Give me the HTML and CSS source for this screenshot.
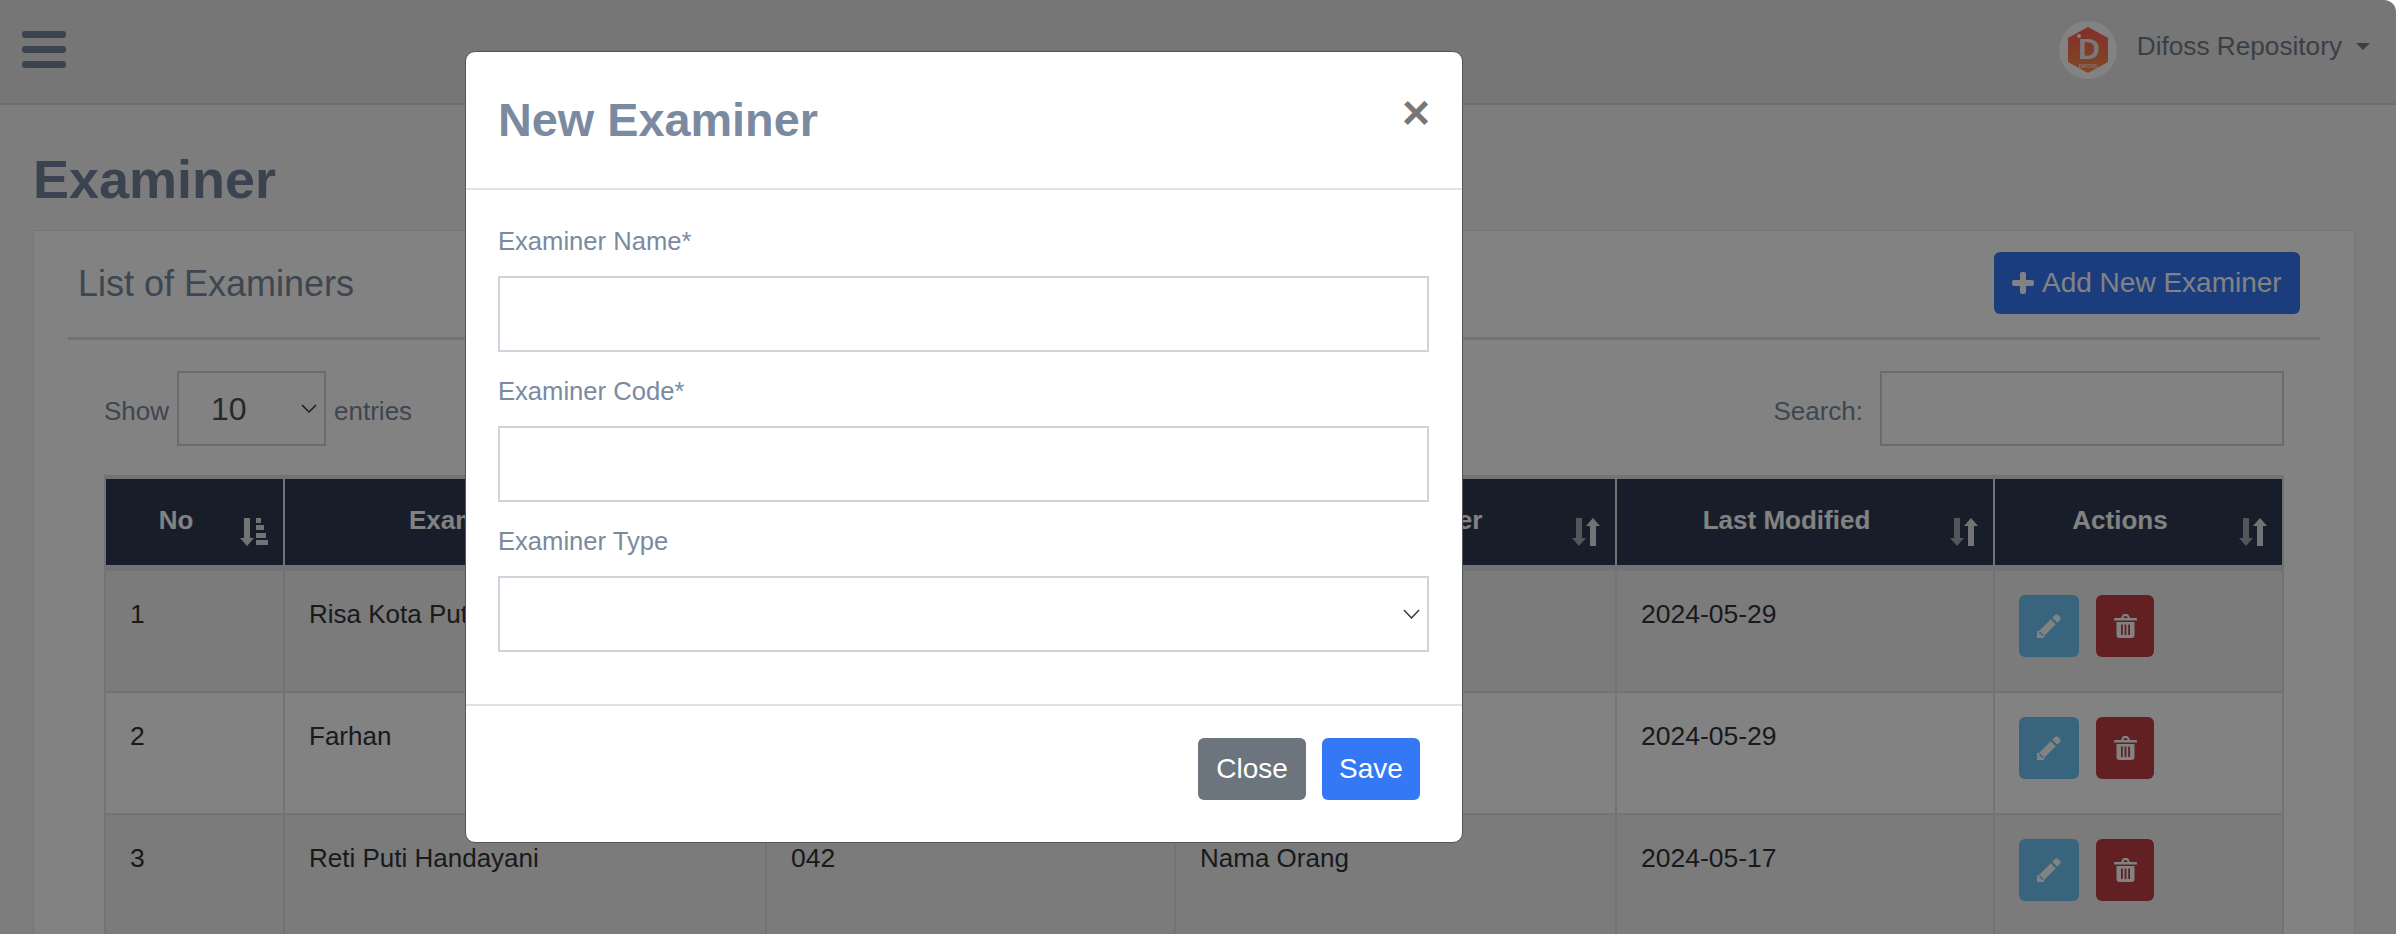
FILE: index.html
```html
<!DOCTYPE html>
<html lang="en">
<head>
    <meta charset="UTF-8">
    <meta name="viewport" content="width=device-width, initial-scale=1.0">
    <title>Examiner</title>
    <link rel="stylesheet" href="styles.css">
</head>
<body>
    <div class="page">
        <!-- Top bar -->
        <header class="topbar">
            <svg class="burger" width="44" height="37" viewBox="0 0 44 37">
                <rect width="44" height="7" rx="3"/>
                <rect y="15" width="44" height="7" rx="3"/>
                <rect y="30" width="44" height="7" rx="3"/>
            </svg>
            <div class="user">
                <span class="avatar">
                    <svg width="40" height="46" viewBox="0 0 40 46">
                        <defs>
                            <linearGradient id="hexFill" x1="0" y1="0" x2="0" y2="1">
                                <stop offset="0" stop-color="#ff5a55"/>
                                <stop offset="1" stop-color="#ff8f4c"/>
                            </linearGradient>
                        </defs>
                        <polygon points="20,0 40,11 40,35 20,46 0,35 0,11" fill="url(#hexFill)"/>
                        <circle cx="11" cy="9" r="2" fill="#fff"/>
                        <text x="21" y="32" class="logo-letter">D</text>
                        <text x="20" y="41" class="logo-small">DIFOSS</text>
                    </svg>
                </span>
                <span class="user-name">Difoss Repository</span>
                <span class="caret"></span>
            </div>
        </header>

        <main class="content">
            <h1>Examiner</h1>
            <section class="card">
                <div class="card-header">
                    <h2>List of Examiners</h2>
                    <button class="btn-add">
                        <svg width="22" height="22" viewBox="0 0 22 22"><path d="M8 2a2 2 0 0 1 2-2h2a2 2 0 0 1 2 2v6h6a2 2 0 0 1 2 2v2a2 2 0 0 1-2 2h-6v6a2 2 0 0 1-2 2h-2a2 2 0 0 1-2-2v-6H2a2 2 0 0 1-2-2v-2a2 2 0 0 1 2-2h6z"/></svg>
                        Add New Examiner
                    </button>
                </div>
                <div class="card-body">
                    <div class="table-tools">
                        <div class="tools-left">
                            <span class="tools-text">Show</span>
                            <div class="select-wrap length-select">
                                <select>
                                    <option>10</option>
                                </select>
                                <svg class="chevron" width="16" height="10" viewBox="0 0 16 10"><path d="M1 1l7 7 7-7"/></svg>
                            </div>
                            <span class="tools-text">entries</span>
                        </div>
                        <div class="tools-right">
                            <span class="tools-text">Search:</span>
                            <input class="search-input" type="text">
                        </div>
                    </div>

                    <table class="data-table">
                        <thead>
                            <tr>
                                <th class="col-no">No
                                    <svg class="sort-icon" width="28" height="28" viewBox="0 0 28 28">
                                        <path class="sort-on" d="M4 0h6v20h4l-7 8-7-8h4z"/>
                                        <path class="sort-on" d="M16 0h5v5h-5zM16 7h8v5h-8zM16 15h10v5H16zM16 22h12v5H16z"/>
                                    </svg>
                                </th>
                                <th class="col-name">Examiner Name
                                    <svg class="sort-icon" width="28" height="28" viewBox="0 0 28 28"><use href="#sortBoth"/></svg>
                                </th>
                                <th class="col-code">Examiner Code
                                    <svg class="sort-icon" width="28" height="28" viewBox="0 0 28 28"><use href="#sortBoth"/></svg>
                                </th>
                                <th class="col-modifier">Name of Modifier
                                    <svg class="sort-icon" width="28" height="28" viewBox="0 0 28 28"><use href="#sortBoth"/></svg>
                                </th>
                                <th class="col-date">Last Modified
                                    <svg class="sort-icon" width="28" height="28" viewBox="0 0 28 28"><use href="#sortBoth"/></svg>
                                </th>
                                <th class="col-actions">Actions
                                    <svg class="sort-icon" width="28" height="28" viewBox="0 0 28 28"><use href="#sortBoth"/></svg>
                                </th>
                            </tr>
                        </thead>
                        <tbody>
                            <tr>
                                <td>1</td>
                                <td class="cell-name">Risa Kota Putri</td>
                                <td>044</td>
                                <td class="cell-name">Nama Orang</td>
                                <td>2024-05-29</td>
                                <td>
                                    <div class="row-actions">
                                        <button class="btn-icon btn-edit"><svg width="24" height="24" viewBox="0 0 24 24"><use href="#pencil"/></svg></button>
                                        <button class="btn-icon btn-delete"><svg width="23" height="24" viewBox="0 0 23 24"><use href="#trash"/></svg></button>
                                    </div>
                                </td>
                            </tr>
                            <tr>
                                <td>2</td>
                                <td class="cell-name">Farhan</td>
                                <td>043</td>
                                <td class="cell-name">Nama Orang</td>
                                <td>2024-05-29</td>
                                <td>
                                    <div class="row-actions">
                                        <button class="btn-icon btn-edit"><svg width="24" height="24" viewBox="0 0 24 24"><use href="#pencil"/></svg></button>
                                        <button class="btn-icon btn-delete"><svg width="23" height="24" viewBox="0 0 23 24"><use href="#trash"/></svg></button>
                                    </div>
                                </td>
                            </tr>
                            <tr>
                                <td>3</td>
                                <td class="cell-name">Reti Puti Handayani</td>
                                <td>042</td>
                                <td class="cell-name">Nama Orang</td>
                                <td>2024-05-17</td>
                                <td>
                                    <div class="row-actions">
                                        <button class="btn-icon btn-edit"><svg width="24" height="24" viewBox="0 0 24 24"><use href="#pencil"/></svg></button>
                                        <button class="btn-icon btn-delete"><svg width="23" height="24" viewBox="0 0 23 24"><use href="#trash"/></svg></button>
                                    </div>
                                </td>
                            </tr>
                        </tbody>
                    </table>
                </div>
            </section>
        </main>

        <!-- Modal for new examiner -->
        <div class="overlay">
            <div class="modal">
                <div class="modal-header">
                    <h3>New Examiner</h3>
                    <span class="modal-close">×</span>
                </div>
                <form class="modal-body">
                    <div class="form-group">
                        <label>Examiner Name*</label>
                        <input class="form-input" type="text">
                    </div>
                    <div class="form-group">
                        <label>Examiner Code*</label>
                        <input class="form-input" type="text">
                    </div>
                    <div class="form-group">
                        <label>Examiner Type</label>
                        <div class="select-wrap">
                            <select class="form-input">
                                <option></option>
                            </select>
                            <svg class="chevron" width="17" height="10" viewBox="0 0 17 10"><path d="M1 1l7.5 8L16 1"/></svg>
                        </div>
                    </div>
                </form>
                <div class="modal-footer">
                    <button class="btn btn-close">Close</button>
                    <button class="btn btn-save">Save</button>
                </div>
            </div>
        </div>
    </div>

    <!-- Shared icons -->
    <svg class="icon-defs" width="0" height="0">
        <defs>
            <g id="sortBoth">
                <path class="sort-off" d="M4 0h6v20h4l-7 8-7-8h4z"/>
                <path class="sort-on" d="M18 28V8h-4l7-8 7 8h-4v20z"/>
            </g>
            <g id="pencil">
                <path d="M15.3 3.7l2.6-2.6a2.4 2.4 0 0 1 3.3 0l1.7 1.7a2.4 2.4 0 0 1 0 3.3l-2.6 2.6z"/>
                <path fill-rule="evenodd" d="M13.8 5.2l5 5L7 22v2H0v-7h2zM3 17.500l-1 1 3.500 3.500 1-1z"/>
            </g>
            <g id="trash">
                <path fill-rule="evenodd" d="M7 4l1.500-3A2 2 0 0 1 10.300 0h2.400a2 2 0 0 1 1.800 1L16 4h6a1 1 0 0 1 1 1v1.500H0V5a1 1 0 0 1 1-1zM9.300 4h4.400l-.8-1.700h-2.800zM2.500 8h18v13a3 3 0 0 1-3 3h-12a3 3 0 0 1-3-3zM7 10.500v10.500h1.800V10.500zM10.600 10.500v10.500h1.800V10.500zM14.200 10.500v10.500H16V10.500z"/>
            </g>
        </defs>
    </svg>
</body>
</html>
```

FILE: styles.css
```css
* {
    box-sizing: border-box;
}

body {
    margin: 0;
    background-color: #fff;
    font-family: "Liberation Sans", Arial, sans-serif;
    font-size: 26px;
    line-height: 39px;
    color: #7a8aa0;
}

button,
input,
select {
    font-family: inherit;
}

.page {
    position: relative;
    width: 2396px;
    height: 934px;
    overflow: hidden;
    background-color: #f6f6f6;
    border-top-right-radius: 12px;
}

.icon-defs {
    position: absolute;
}

/* Top bar */
.topbar {
    display: flex;
    justify-content: space-between;
    align-items: center;
    height: 105px;
    padding: 0 26px 4px 22px;
    background-color: #e8e8e8;
    border-bottom: 2px solid #d8d8d8;
}

.burger {
    fill: #76849d;
}

.user {
    display: flex;
    align-items: center;
}

.avatar {
    display: flex;
    justify-content: center;
    align-items: center;
    width: 58px;
    height: 58px;
    margin-right: 20px;
    border-radius: 50%;
    background-color: #fff;
}

.logo-letter {
    font-size: 30px;
    font-weight: bold;
    fill: #eee;
    text-anchor: middle;
}

.logo-small {
    font-size: 5px;
    fill: #fff;
    text-anchor: middle;
}

.user-name {
    margin-bottom: 6px;
    font-size: 26.200px;
    color: #727d8b;
}

.caret {
    width: 0;
    height: 0;
    margin-left: 14px;
    margin-bottom: 6px;
    border-top: 7px solid #727d8b;
    border-left: 7px solid transparent;
    border-right: 7px solid transparent;
}

/* Page content */
.content {
    padding: 42px 41px 0 33px;
}

h1 {
    margin: 0 0 18px;
    font-size: 54px;
    line-height: 65px;
    font-weight: bold;
    color: #76849d;
}

.card {
    background-color: #fff;
    border: 1px solid #e4e6e9;
}

.card-header {
    display: flex;
    justify-content: space-between;
    align-items: center;
    height: 109px;
    margin: 0 34px 0 34px;
    padding: 0 20px 3px 10px;
    border-bottom: 3px solid #dcdfe2;
}

.card-header h2 {
    margin: 2px 0 0;
    font-size: 36px;
    font-weight: normal;
    color: #7a8aa0;
}

.btn-add {
    display: flex;
    align-items: center;
    gap: 8px;
    height: 62px;
    width: 306px;
    padding: 0 0 0 18px;
    border: none;
    border-radius: 6px;
    background-color: #3578f6;
    color: #fff;
    font-size: 28px;
}

.btn-add svg {
    fill: #fff;
}

.card-body {
    padding: 31px 70px 0;
}

.table-tools {
    display: flex;
    justify-content: space-between;
    align-items: center;
    margin-bottom: 29px;
    padding-right: 0;
}

.tools-left,
.tools-right {
    display: flex;
    align-items: center;
}

.tools-left {
    gap: 8px;
}

.tools-right {
    gap: 17px;
}

.tools-text {
    padding-top: 5px;
}

.select-wrap {
    position: relative;
}

.select-wrap select {
    appearance: none;
    display: block;
    width: 100%;
    background-color: #fff;
    outline: none;
}

.chevron {
    position: absolute;
    top: 50%;
    right: 9px;
    margin-top: -5px;
    fill: none;
    stroke: #343a40;
    stroke-width: 1.500;
}

.length-select {
    width: 149px;
}

.length-select select {
    height: 75px;
    padding-left: 32px;
    border: 2px solid #ced4da;
    border-radius: 0;
    font-size: 32px;
    color: #495057;
}

.search-input {
    width: 404px;
    height: 75px;
    border: 2px solid #ced4da;
    background-color: #fff;
}

/* Table */
.data-table {
    table-layout: fixed;
    width: 2180px;
    border-collapse: separate;
    border-spacing: 0;
    border-left: 2px solid #dee2e6;
    border-top: 4px solid #dee2e6;
    color: #303338;
}

.data-table th {
    position: relative;
    height: 92px;
    padding: 25px 62px 0 25px;
    vertical-align: top;
    font-size: 26px;
    line-height: 33px;
    font-weight: bold;
    text-align: center;
    color: #fff;
    background-color: #2f3c52;
    background-clip: padding-box;
    border-right: 2px solid #dee2e6;
    border-bottom: 6px solid #dee2e6;
}

.col-no { width: 179px; }
.col-name { width: 482px; }
.col-code { width: 409px; }
.col-modifier { width: 441px; }
.col-date { width: 378px; }
.col-actions { width: 289px; }

.sort-icon {
    position: absolute;
    top: 39px;
    right: 15px;
}

.sort-on {
    fill: #fff;
    opacity: 0.85;
}

.sort-off {
    fill: #fff;
    opacity: 0.55;
}

.data-table td {
    height: 122px;
    padding: 24px;
    vertical-align: top;
    font-size: 26.500px;
    border-right: 2px solid #dee2e6;
    border-bottom: 2px solid #dee2e6;
}

.data-table td.cell-name {
    font-size: 26px;
}

.data-table tbody tr:nth-child(odd) {
    background-color: rgba(0, 0, 0, 0.05);
}

.row-actions {
    display: flex;
    gap: 17px;
}

.btn-icon {
    display: flex;
    justify-content: center;
    align-items: center;
    height: 62px;
    padding: 0;
    border: none;
    border-radius: 6px;
}

.btn-icon svg {
    fill: #fff;
}

.btn-edit {
    width: 60px;
    background-color: #6ec4f5;
}

.btn-delete {
    width: 58px;
    background-color: #c03f46;
}

/* Modal */
.overlay {
    position: absolute;
    top: 0;
    left: 0;
    width: 100%;
    height: 100%;
    background-color: rgba(0, 0, 0, 0.49);
}

.modal {
    position: absolute;
    top: 51px;
    left: 465px;
    width: 998px;
    background-color: #fff;
    border: 1px solid #555;
    border-radius: 10px;
}

.modal-header {
    display: flex;
    justify-content: space-between;
    height: 138px;
    padding: 37px 32px 0 32px;
    border-bottom: 2px solid #dee2e6;
}

.modal-header h3 {
    margin: 0;
    font-size: 46.800px;
    line-height: 62px;
    font-weight: bold;
    color: #7a8aa0;
}

.modal-close {
    font-size: 48px;
    line-height: 48px;
    font-weight: bold;
    color: #777;
}

.modal-body {
    padding: 32px 33px 32px 32px;
}

.form-group {
    margin-bottom: 20px;
}

.form-group label {
    display: block;
    margin-bottom: 15px;
    font-size: 25.600px;
    color: #7a8aa0;
}

.form-input {
    display: block;
    width: 100%;
    height: 76px;
    border: 2px solid #ced4da;
    border-radius: 0;
    background-color: #fff;
}

.modal-footer {
    display: flex;
    justify-content: flex-end;
    gap: 16px;
    height: 138px;
    padding: 32px 42px 0 0;
    border-top: 2px solid #dee2e6;
}

.btn {
    height: 62px;
    padding: 0;
    border: none;
    border-radius: 6px;
    color: #fff;
    font-size: 28px;
}

.btn-close {
    width: 108px;
    background-color: #6c757d;
}

.btn-save {
    width: 98px;
    background-color: #3578f6;
}
```
